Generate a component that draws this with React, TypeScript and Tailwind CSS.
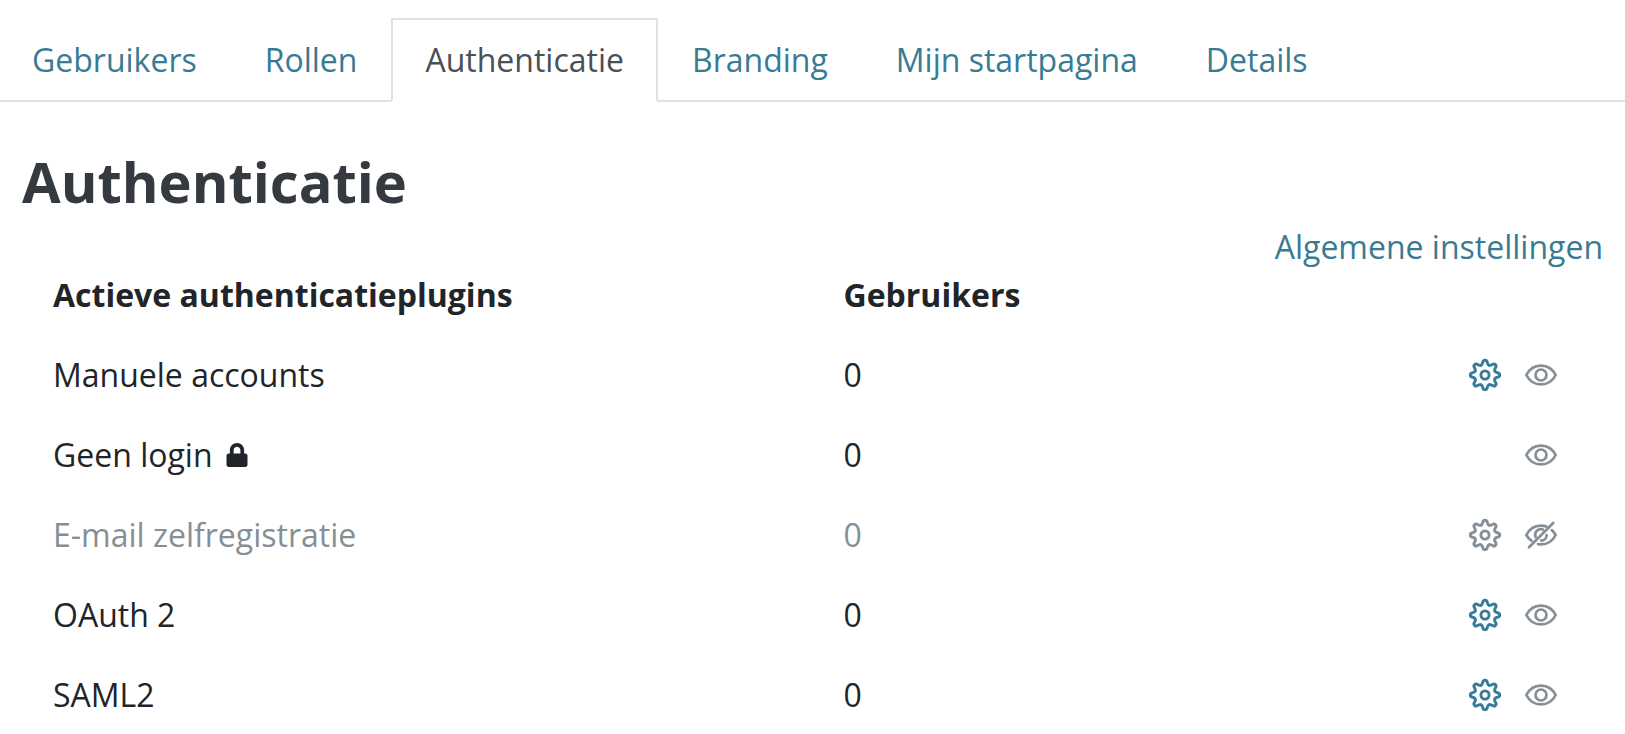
import React from "react";
import { FaLock } from "react-icons/fa";

const tabs = ["Gebruikers", "Rollen", "Authenticatie", "Branding", "Mijn startpagina", "Details"];

type Plugin = {
  name: string;
  users: number;
  locked?: boolean;
  settings: boolean;
  enabled: boolean;
};

const plugins: Plugin[] = [
  { name: "Manuele accounts", users: 0, settings: true, enabled: true },
  { name: "Geen login", users: 0, locked: true, settings: false, enabled: true },
  { name: "E-mail zelfregistratie", users: 0, settings: true, enabled: false },
  { name: "OAuth 2", users: 0, settings: true, enabled: true },
  { name: "SAML2", users: 0, settings: true, enabled: true },
];

const toothAngles = [0, 45, 90, 135, 180, 225, 270, 315];

function GearIcon() {
  return (
    <svg viewBox="0 0 34 34" className="size-[34px]" fill="none" stroke="currentColor" strokeWidth="2.9" strokeLinecap="round" strokeLinejoin="round" aria-hidden="true">
      <g transform="translate(17 17)">
        {toothAngles.map((angle) => (
          <path
            key={angle}
            transform={`rotate(${angle})`}
            d="M-4.06 -9.8C-3 -10.3 -2.5 -11 -2.3 -12.4C-2.1 -14 -1.3 -14.7 0 -14.7C1.3 -14.7 2.1 -14 2.3 -12.4C2.5 -11 3 -10.3 4.06 -9.8"
          />
        ))}
        <circle r="4.1" />
      </g>
    </svg>
  );
}

function EyeIcon() {
  return (
    <svg viewBox="0 0 34 34" className="size-[34px]" fill="none" stroke="currentColor" strokeWidth="2.7" strokeLinecap="round" strokeLinejoin="round" aria-hidden="true">
      <path d="M2.3 17C5.4 11 10.6 7.6 17 7.6C23.4 7.6 28.6 11 31.7 17C28.6 23 23.4 26.4 17 26.4C10.6 26.4 5.4 23 2.3 17Z" />
      <circle cx="17" cy="17" r="5.5" />
    </svg>
  );
}

function EyeSlashIcon() {
  return (
    <svg viewBox="0 0 34 34" className="size-[34px]" fill="none" stroke="currentColor" strokeWidth="2.7" strokeLinecap="round" strokeLinejoin="round" aria-hidden="true">
      <path d="M7.4 22.7C5.3 21.2 3.6 19.4 2.3 17C5.4 11 10.6 7.6 17 7.6C18.9 7.6 20.7 7.9 22.4 8.5" />
      <path d="M27.8 12.1C29.4 13.4 30.7 15.1 31.7 17C28.6 23 23.4 26.4 17 26.4C16 26.4 15 26.3 14 26.1" />
      <path d="M11.6 18.9A5.6 5.6 0 0 1 18.9 11.6" />
      <path d="M22.6 17.2A5.6 5.6 0 0 1 17.2 22.6" />
      <path d="M5 29.2L29.2 5" />
    </svg>
  );
}

export default function App() {
  return (
    <div className="overflow-x-hidden bg-white pt-[18px] pb-4 font-['Open_Sans',sans-serif] text-[32px] leading-[48px] text-[#212529]">
      <nav className="-ml-[2px] flex border-b-2 border-[#dee2e6]">
        {tabs.map((tab) => (
          <a
            key={tab}
            href="#"
            aria-current={tab === "Authenticatie" ? "page" : undefined}
            className={
              tab === "Authenticatie"
                ? "-mb-[2px] border-2 border-[#dee2e6] border-b-white bg-white px-8 py-4 text-[#495057]"
                : "-mb-[2px] border-2 border-transparent px-8 py-4 text-[#377b94]"
            }
          >
            {tab}
          </a>
        ))}
      </nav>

      <main className="px-[22px] pt-[47px]">
        <h1 className="mb-[10px] text-[56px] leading-[64px] font-bold text-[#343a40]">Authenticatie</h1>
        <div className="flex justify-end">
          <a href="#" className="text-[#377b94]">Algemene instellingen</a>
        </div>
        <table className="w-full table-fixed text-left">
          <thead>
            <tr>
              <th className="w-1/2 pb-4 pl-[31px] font-bold">Actieve authenticatieplugins</th>
              <th className="w-1/4 pb-4 pl-[31px] font-bold">Gebruikers</th>
              <td className="w-1/4 pb-4" />
            </tr>
          </thead>
          <tbody>
            {plugins.map((plugin) => (
              <tr key={plugin.name} className={plugin.enabled ? "" : "text-[#868e96]"}>
                <td className="py-4 pl-[31px]">
                  <div className="flex items-center gap-3">
                    {plugin.name}
                    {plugin.locked && <FaLock className="size-6" aria-hidden="true" />}
                  </div>
                </td>
                <td className="py-4 pl-[31px]">{plugin.users}</td>
                <td className="py-4 pr-[45px]">
                  <div className="flex h-12 items-center justify-end gap-[22px]">
                    {plugin.settings && (
                      <a href="#" aria-label="Instellingen" className={plugin.enabled ? "text-[#377b94]" : "text-[#868e96]"}>
                        <GearIcon />
                      </a>
                    )}
                    <button type="button" aria-label={plugin.enabled ? "Deactiveren" : "Activeren"} className="text-[#868e96]">
                      {plugin.enabled ? <EyeIcon /> : <EyeSlashIcon />}
                    </button>
                  </div>
                </td>
              </tr>
            ))}
          </tbody>
        </table>
      </main>
    </div>
  );
}
